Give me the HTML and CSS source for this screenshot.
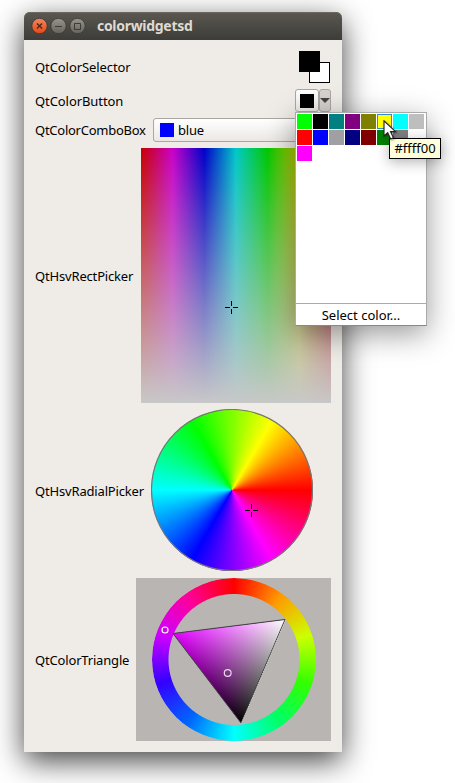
FILE: index.html
```html
<!DOCTYPE html>
<html lang="en">
<head>
<meta charset="utf-8">
<title>colorwidgetsd</title>
<link rel="stylesheet" href="styles.css">
</head>
<body>
<main class="window">
  <header class="titlebar">
    <svg class="controls" width="56" height="18" viewBox="0 0 56 18">
      <defs>
        <linearGradient id="close" x2="0" y2="1"><stop offset="0" stop-color="#f58560"/><stop offset="1" stop-color="#e04a18"/></linearGradient>
        <linearGradient id="ctl" x2="0" y2="1"><stop offset="0" stop-color="#96948c"/><stop offset="1" stop-color="#65635c"/></linearGradient>
      </defs>
      <circle cx="8.500" cy="9" r="7.700" fill="url(#close)" stroke="#38362f" stroke-width=".8"/>
      <circle cx="27.500" cy="9" r="7.700" fill="url(#ctl)" stroke="#38362f" stroke-width=".8"/>
      <circle cx="46.500" cy="9" r="7.700" fill="url(#ctl)" stroke="#38362f" stroke-width=".8"/>
      <path d="M6 6.500l5 5M11 6.500l-5 5" stroke="#4b281a" stroke-width="1.400"/>
      <path d="M24 9.500h7M43.500 6.500h6v6h-6z" stroke="#3c3b37" fill="none"/>
    </svg>
    <h1 class="title">colorwidgetsd</h1>
  </header>
  <section class="form">
    <div class="row row-selector">
      <span class="label loose">QtColorSelector</span>
      <div class="selector"><i class="back"></i><i class="front"></i></div>
    </div>
    <div class="row row-button">
      <span class="label loose">QtColorButton</span>
      <div class="split"><span class="btn"><i></i></span><span class="drop"><i></i></span></div>
    </div>
    <div class="row row-combo">
      <span class="label tight">QtColorComboBox</span>
      <div class="combo"><i></i><span>blue</span></div>
    </div>
    <div class="row">
      <span class="label">QtHsvRectPicker</span>
      <div class="rect-picker">
        <svg width="190" height="255"><path d="M84 159.500h5M92 159.500h5M90.500 153v5M90.500 161v5" stroke="#000"/></svg>
      </div>
    </div>
    <div class="row row-radial">
      <span class="label">QtHsvRadialPicker</span>
      <div class="radial-picker">
        <svg width="162" height="162"><circle cx="81" cy="81" r="80.500" fill="none" stroke="#777" stroke-width="1.200"/><path d="M94 101.500h5M102 101.500h5M100.500 95v5M100.500 103v5" stroke="#000"/></svg>
      </div>
    </div>
    <div class="row">
      <span class="label">QtColorTriangle</span>
      <div class="triangle-picker">
        <div class="ring"></div>
        <svg class="triangle" width="195" height="163">
          <defs>
            <linearGradient id="hue" gradientUnits="userSpaceOnUse" x1="37" y1="55.500" x2="126.800" y2="93.700"><stop offset="0" stop-color="#e100ff"/><stop offset="1" stop-color="#e100ff" stop-opacity="0"/></linearGradient>
            <linearGradient id="white" gradientUnits="userSpaceOnUse" x1="149" y1="41.500" x2="71.200" y2="100.600"><stop offset="0" stop-color="#fff"/><stop offset="1" stop-color="#fff" stop-opacity="0"/></linearGradient>
          </defs>
          <g class="blend">
            <path d="M37 55.500L149 41.500L105 145z" fill="#000"/>
            <path d="M37 55.500L149 41.500L105 145z" fill="url(#hue)"/>
            <path class="add" d="M37 55.500L149 41.500L105 145z" fill="url(#white)"/>
          </g>
          <path d="M149 41.500L37 55.500L105 145" fill="none" stroke="#444" stroke-width="1"/>
          <path d="M149 41.500L105 145" stroke="#333" stroke-width=".8"/>
          <path d="M149.500 42L105.500 145" stroke="#ddd" stroke-width=".8" stroke-dasharray="1.200 1.200"/>
          <circle cx="29" cy="52" r="3" fill="none" stroke="#fff" stroke-width="1.200"/>
          <circle cx="91.700" cy="95" r="3.400" fill="none" stroke="#e8d8e8" stroke-width="1.200"/>
        </svg>
      </div>
    </div>
  </section>
</main>
<aside class="popup">
  <div class="swatches">
    <i class="c-lime"></i><i class="c-black"></i><i class="c-teal"></i><i class="c-purple"></i><i class="c-olive"></i><i class="c-yellow"></i><i class="c-cyan"></i><i class="c-silver"></i>
    <i class="c-red"></i><i class="c-blue"></i><i class="c-grey"></i><i class="c-navy"></i><i class="c-maroon"></i><i class="c-green"></i><i class="c-dark"></i><i></i>
    <i class="c-magenta"></i>
  </div>
  <div class="more"><span>Select color...</span></div>
</aside>
<div class="tooltip"><span>#ffff00</span></div>
<svg class="cursor" width="16" height="22" viewBox="0 0 16 22"><path d="M1 .8V16l3.700-3.400 3 6.400 2.700-1.200-2.900-6.200H12.500z" fill="#fff" stroke="#222" stroke-width="1.100"/></svg>
</body>
</html>
```
FILE: styles.css
```css
* { box-sizing: border-box; }
body {
  margin: 0;
  width: 455px;
  height: 783px;
  padding: 12px 0 0 24px;
  overflow: hidden;
  position: relative;
  background: #fff;
  font: 13px/18px "Noto Sans", "Open Sans", sans-serif;
  color: #000;
}
i { display: block; }
svg { display: block; }
.window {
  width: 318px;
  height: 740px;
  border-radius: 6px 6px 0 0;
  background: #efebe7;
  box-shadow: 0 9px 30px rgba(0, 0, 0, .74);
}
.titlebar {
  height: 28px;
  display: flex;
  align-items: center;
  gap: 10px;
  padding-left: 7px;
  border-radius: 6px 6px 0 0;
  background: linear-gradient(#5b5850, #3d3c38);
  box-shadow: inset 0 1px #69675f;
}
.title { margin: 0; font-size: 14px; letter-spacing: -.3px; line-height: 18px; color: #dfdbd2; font-weight: 700; }
.form { display: flex; flex-direction: column; gap: 6px; padding: 11px; }
.row { display: flex; justify-content: space-between; align-items: center; }
.row-selector { height: 32px; }
.row-button { height: 23px; }
.row-combo { height: 24px; }
.row-radial { height: 163px; }
.label { white-space: nowrap; width: 0; letter-spacing: -.17px; }
.label.loose { letter-spacing: -.08px; }
.label.tight { letter-spacing: -.26px; }
.selector { width: 32px; height: 32px; display: grid; }
.selector i { grid-area: 1 / 1; width: 21px; height: 21px; border: 1px solid #000; }
.selector .back { background: #fff; place-self: end; margin: 0 1px 0 0; }
.selector .front { background: #000; }
.split { display: flex; width: 36px; }
.btn, .drop {
  display: flex; align-items: center; justify-content: center;
  height: 23px; border: 1px solid #aaa6a1; border-radius: 3px;
  background: linear-gradient(#fff, #ebe8e4);
}
.btn { width: 24px; }
.btn i { width: 14px; height: 14px; background: #000; }
.drop { width: 12px; background: #d6d2ce; }
.drop i { border: 5px solid transparent; border-top-color: #444; border-bottom: 0; margin: 0 -2px; }
.combo {
  display: flex; align-items: center; gap: 4px;
  width: 178px; height: 24px; padding-left: 6px;
  border: 1px solid #aaa6a1; border-radius: 3px;
  background: linear-gradient(#fff, #ebe8e4);
  letter-spacing: -.2px;
}
.combo i { width: 14px; height: 14px; background: #00f; }
.rect-picker {
  width: 190px; height: 255px;
  background:
    linear-gradient(rgba(200, 200, 200, 0), rgb(200, 200, 200)),
    linear-gradient(90deg, #c80000, #c800c8, #0000c8, #00c8c8, #00c800, #c8c800, #c80000);
}
.radial-picker {
  width: 162px; height: 162px; margin-right: 18px; align-self: flex-start; border-radius: 50%;
  background: conic-gradient(from 90deg, #f00, #f0f, #00f, #0ff, #0f0, #ff0, #f00);
}
.triangle-picker { width: 195px; height: 163px; background: #b8b5b2; display: grid; }
.ring {
  grid-area: 1 / 1; width: 164px; height: 163px; margin-left: 16px;
  background: conic-gradient(#f00, #f90, #cf0, #3f0, #0f6, #0ff, #06f, #30f, #c0f, #f09, #f00);
  border-radius: 50%;
  -webkit-mask: radial-gradient(circle, transparent 65px, #000 66px);
  mask: radial-gradient(circle, transparent 65px, #000 66px);
}
.triangle { grid-area: 1 / 1; z-index: 1; }
.blend { isolation: isolate; }
.add { mix-blend-mode: plus-lighter; }
.popup {
  position: absolute; left: 295px; top: 112px; width: 132px; height: 214px;
  display: flex; flex-direction: column; justify-content: space-between;
  background: #fff; border: 1px solid #aaa; border-bottom-color: #888;
  box-shadow: 0 8px 28px rgba(0, 0, 0, .4);
}
.swatches { display: grid; grid-template-columns: repeat(8, 15px); grid-auto-rows: 15px; gap: 1px; padding: 1px; }
.more { height: 22px; border-top: 1px solid #aaa; text-align: center; line-height: 22px; }
.c-lime { background: #0f0; }
.c-black { background: #000; }
.c-teal { background: #008080; }
.c-purple { background: #800080; }
.c-olive { background: #808000; }
.c-yellow { background: #ff0; border: 1px solid #308cc6; }
.c-cyan { background: #0ff; }
.c-silver { background: #bebebe; }
.c-red { background: #f00; }
.c-blue { background: #00f; }
.c-grey { background: #a0a0a4; }
.c-navy { background: #000080; }
.c-maroon { background: #800000; }
.c-green { background: #008000; }
.c-dark { background: #808080; }
.c-magenta { background: #f0f; }
.tooltip {
  position: absolute; left: 389px; top: 138px; width: 52px; height: 21px;
  border: 1px solid #000; background: #ffffdc; text-align: center; line-height: 19px;
  box-shadow: 0 3px 14px rgba(0, 0, 0, .3);
}
.cursor { position: absolute; left: 383px; top: 120px; filter: drop-shadow(1px 1px 1px rgba(0, 0, 0, .4)); }
```
